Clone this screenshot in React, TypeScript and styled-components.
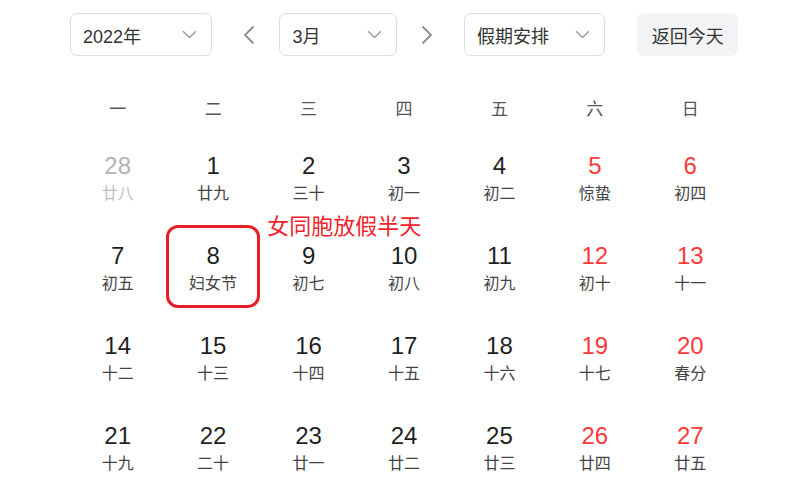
import React from "react";
import styled, { createGlobalStyle } from "styled-components";

const Global = createGlobalStyle`
  html, body { margin: 0; padding: 0; background: #fff; }
  body {
    font-family: "Liberation Sans", "Noto Sans CJK SC", Arial, sans-serif;
    color: #222;
    overflow: hidden;
  }
`;

const Page = styled.div`
  width: 668px;
  padding: 13px 0 0 70px;
`;

const Toolbar = styled.div`
  display: flex;
  align-items: center;
  height: 43px;
`;

const Select = styled.div<{ $w: number }>`
  box-sizing: border-box;
  width: ${(p) => p.$w}px;
  height: 43px;
  border: 1px solid #dcdce3;
  border-radius: 7px;
  display: flex;
  align-items: center;
  justify-content: space-between;
  padding: 0 14px 0 12px;
  font-size: 18px;
  color: #333;
`;

const ArrowBtn = styled.div<{ $dir: "left" | "right" }>`
  width: 12px;
  height: 20px;
  display: flex;
  align-items: center;
  justify-content: center;
  margin: ${(p) => (p.$dir === "left" ? "0 24px 0 31px" : "0 31px 0 24px")};
`;

const TodayButton = styled.div`
  box-sizing: border-box;
  margin-left: 32px;
  width: 101px;
  height: 43px;
  border-radius: 7px;
  background: #f3f3f5;
  display: flex;
  align-items: center;
  justify-content: center;
  font-size: 18px;
  color: #333;
`;

const WeekRow = styled.div`
  margin-top: 34px;
  height: 34px;
  display: grid;
  grid-template-columns: repeat(7, 1fr);
  align-items: center;
`;

const WeekDay = styled.div`
  text-align: center;
  font-size: 17px;
  color: #555;
`;

const Grid = styled.div`
  margin-top: 6px;
  display: grid;
  grid-template-columns: repeat(7, 1fr);
  grid-auto-rows: 90px;
`;

const Cell = styled.div`
  display: flex;
  justify-content: center;
`;

const DayBox = styled.div<{ $selected?: boolean }>`
  position: relative;
  box-sizing: border-box;
  margin-top: 5px;
  width: 94px;
  height: 83px;
  border: 3px solid ${(p) => (p.$selected ? "#e81d25" : "transparent")};
  border-radius: 12px;
  display: flex;
  flex-direction: column;
  align-items: center;
  padding-top: 14px;
`;

const DayNum = styled.div<{ $tone: "normal" | "red" | "muted" }>`
  font-size: 24px;
  line-height: 28px;
  color: ${(p) =>
    p.$tone === "red" ? "#fa3a3a" : p.$tone === "muted" ? "#b3b3b3" : "#1f1f1f"};
`;

const Lunar = styled.div<{ $muted?: boolean }>`
  margin-top: 4px;
  font-size: 16px;
  line-height: 20px;
  color: ${(p) => (p.$muted ? "#bdbdbd" : "#444")};
`;

const Note = styled.div`
  position: absolute;
  left: 98px;
  top: -14px;
  white-space: nowrap;
  font-size: 22px;
  line-height: 25px;
  color: #f0232c;
`;

const Chevron = () => (
  <svg width="15" height="9" viewBox="0 0 15 9">
    <path d="M1 1.2 L7.5 7.5 L14 1.2" fill="none" stroke="#9a9aa2" strokeWidth="1.4" />
  </svg>
);

const Arrow = ({ dir }: { dir: "left" | "right" }) => (
  <svg width="12" height="20" viewBox="0 0 12 20">
    <path
      d={dir === "left" ? "M10.5 1.5 L2 10 L10.5 18.5" : "M1.5 1.5 L10 10 L1.5 18.5"}
      fill="none"
      stroke="#8c8c8c"
      strokeWidth="1.8"
    />
  </svg>
);

type Day = { n: number; l: string; red?: boolean; muted?: boolean; sel?: boolean; note?: string };

const days: Day[] = [
  { n: 28, l: "廿八", muted: true },
  { n: 1, l: "廿九" },
  { n: 2, l: "三十" },
  { n: 3, l: "初一" },
  { n: 4, l: "初二" },
  { n: 5, l: "惊蛰", red: true },
  { n: 6, l: "初四", red: true },
  { n: 7, l: "初五" },
  { n: 8, l: "妇女节", sel: true, note: "女同胞放假半天" },
  { n: 9, l: "初七" },
  { n: 10, l: "初八" },
  { n: 11, l: "初九" },
  { n: 12, l: "初十", red: true },
  { n: 13, l: "十一", red: true },
  { n: 14, l: "十二" },
  { n: 15, l: "十三" },
  { n: 16, l: "十四" },
  { n: 17, l: "十五" },
  { n: 18, l: "十六" },
  { n: 19, l: "十七", red: true },
  { n: 20, l: "春分", red: true },
  { n: 21, l: "十九" },
  { n: 22, l: "二十" },
  { n: 23, l: "廿一" },
  { n: 24, l: "廿二" },
  { n: 25, l: "廿三" },
  { n: 26, l: "廿四", red: true },
  { n: 27, l: "廿五", red: true },
];

const weekdays = ["一", "二", "三", "四", "五", "六", "日"];

export default function App() {
  return (
    <>
      <Global />
      <Page>
        <Toolbar>
          <Select $w={143}>
            <span>2022年</span>
            <Chevron />
          </Select>
          <ArrowBtn $dir="left">
            <Arrow dir="left" />
          </ArrowBtn>
          <Select $w={118}>
            <span>3月</span>
            <Chevron />
          </Select>
          <ArrowBtn $dir="right">
            <Arrow dir="right" />
          </ArrowBtn>
          <Select $w={142}>
            <span>假期安排</span>
            <Chevron />
          </Select>
          <TodayButton>返回今天</TodayButton>
        </Toolbar>
        <WeekRow>
          {weekdays.map((w) => (
            <WeekDay key={w}>{w}</WeekDay>
          ))}
        </WeekRow>
        <Grid>
          {days.map((d, i) => (
            <Cell key={i}>
              <DayBox $selected={d.sel}>
                <DayNum $tone={d.muted ? "muted" : d.red ? "red" : "normal"}>{d.n}</DayNum>
                <Lunar $muted={d.muted}>{d.l}</Lunar>
                {d.note && <Note>{d.note}</Note>}
              </DayBox>
            </Cell>
          ))}
        </Grid>
      </Page>
    </>
  );
}
